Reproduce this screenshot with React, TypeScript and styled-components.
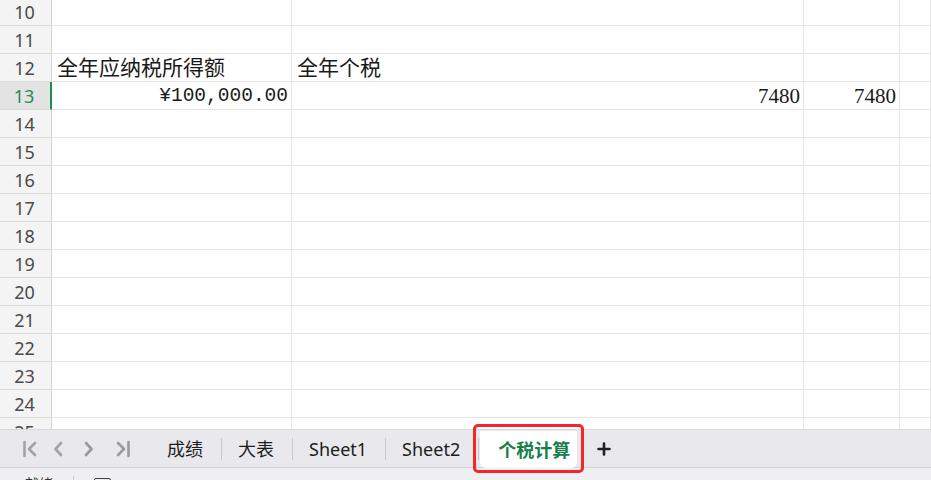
import { createGlobalStyle } from 'styled-components'
import styled from 'styled-components'
import type { FC } from 'react'

const GlobalStyle = createGlobalStyle`
  html, body {
    margin: 0;
    padding: 0;
    width: 931px;
    height: 480px;
    overflow: hidden;
    background: #ffffff;
  }
  * {
    box-sizing: border-box;
  }
`

type CellData = { text: string; kind?: 'text' | 'number' | 'money' }

type RowData = {
  num: number
  cells: CellData[]
}

const empty = (): CellData[] => [{ text: '' }, { text: '' }, { text: '' }, { text: '' }]

const rows: RowData[] = [
  { num: 10, cells: empty() },
  { num: 11, cells: empty() },
  { num: 12, cells: [{ text: '全年应纳税所得额' }, { text: '全年个税' }, { text: '' }, { text: '' }] },
  {
    num: 13,
    cells: [
      { text: '¥100,000.00', kind: 'money' },
      { text: '7480', kind: 'number' },
      { text: '7480', kind: 'number' },
      { text: '' }
    ]
  },
  ...Array.from({ length: 12 }, (_, i) => ({ num: 14 + i, cells: empty() }))
]

const tabs = ['成绩', '大表', 'Sheet1', 'Sheet2']

const App: FC = () => {
  return (
    <>
      <GlobalStyle />
      <Window>
        <GridArea>
          <GridInner>
            {rows.map((row) => (
              <Row key={row.num}>
                <RowHeader $active={row.num === 13}>{row.num}</RowHeader>
                {row.cells.map((cell, i) => (
                  <Cell key={i} $kind={cell.kind ?? 'text'}>
                    {cell.text}
                  </Cell>
                ))}
              </Row>
            ))}
          </GridInner>
        </GridArea>
        <TabBar>
          <NavGroup>
            <NavButton>
              <svg width="16" height="18" viewBox="0 0 16 18" fill="none" stroke="#a3a3a7" strokeWidth="2.6" strokeLinecap="round" strokeLinejoin="round">
                <line x1="2.5" y1="2" x2="2.5" y2="16" />
                <polyline points="13,3 7,9 13,15" />
              </svg>
            </NavButton>
            <NavButton>
              <svg width="10" height="18" viewBox="0 0 10 18" fill="none" stroke="#a3a3a7" strokeWidth="2.6" strokeLinecap="round" strokeLinejoin="round">
                <polyline points="8,3 2.5,9 8,15" />
              </svg>
            </NavButton>
            <NavButton>
              <svg width="10" height="18" viewBox="0 0 10 18" fill="none" stroke="#9a9a9e" strokeWidth="2.6" strokeLinecap="round" strokeLinejoin="round">
                <polyline points="2,3 7.5,9 2,15" />
              </svg>
            </NavButton>
            <NavButton>
              <svg width="16" height="18" viewBox="0 0 16 18" fill="none" stroke="#9a9a9e" strokeWidth="2.6" strokeLinecap="round" strokeLinejoin="round">
                <polyline points="3,3 9,9 3,15" />
                <line x1="13.5" y1="2" x2="13.5" y2="16" />
              </svg>
            </NavButton>
          </NavGroup>
          <Tabs>
            {tabs.map((name) => (
              <Tab key={name}>{name}</Tab>
            ))}
            <ActiveTab>
              个税计算
              <Highlight />
            </ActiveTab>
            <AddButton>
              <svg width="14" height="14" viewBox="0 0 14 14" stroke="#222" strokeWidth="2.6" strokeLinecap="round">
                <line x1="7" y1="1.5" x2="7" y2="12.5" />
                <line x1="1.5" y1="7" x2="12.5" y2="7" />
              </svg>
            </AddButton>
          </Tabs>
        </TabBar>
        <StatusBar>
          <StatusText>就绪</StatusText>
          <StatusDivider />
          <StatusIcon />
        </StatusBar>
      </Window>
    </>
  )
}

const Window = styled.div`
  display: flex;
  flex-direction: column;
  width: 931px;
  height: 480px;
  overflow: hidden;
`

const GridArea = styled.div`
  height: 429px;
  overflow: hidden;
  flex-shrink: 0;
`

const GridInner = styled.div`
  margin-top: -2px;
`

const Row = styled.div`
  display: grid;
  grid-template-columns: 52px 240px 512px 96px 1fr;
  height: 28px;
`

const RowHeader = styled.div<{ $active: boolean }>`
  display: flex;
  align-items: center;
  justify-content: center;
  padding-right: 2px;
  background: ${({ $active }) => ($active ? '#e3e3e3' : '#f4f4f4')};
  border-bottom: 1px solid #dcdcdc;
  border-right: ${({ $active }) => ($active ? '2px solid #1f8c52' : '1px solid #d6d6d6')};
  color: ${({ $active }) => ($active ? '#1f8c52' : '#4a4a4a')};
  font-family: 'Noto Sans', 'Noto Sans CJK SC', sans-serif;
  font-size: 18px;
  line-height: 1;
`

const Cell = styled.div<{ $kind: 'text' | 'number' | 'money' }>`
  display: flex;
  align-items: flex-end;
  justify-content: ${({ $kind }) => ($kind === 'text' ? 'flex-start' : 'flex-end')};
  padding: ${({ $kind }) => ($kind === 'text' ? '0 0 0 5px' : '0 3px 0 0')};
  border-bottom: 1px solid #e4e4e4;
  border-right: 1px solid #e4e4e4;
  font-family: ${({ $kind }) =>
    $kind === 'money' ? "'Liberation Mono', monospace" : "'Liberation Serif', 'Noto Sans CJK SC', serif"};
  font-size: ${({ $kind }) => ($kind === 'money' ? '19.5px' : '21px')};
  line-height: 25px;
  color: #1a1a1a;
  white-space: nowrap;
  overflow: hidden;
`

const TabBar = styled.div`
  height: 39px;
  flex-shrink: 0;
  display: flex;
  align-items: center;
  background: #e9e9ed;
  border-top: 1px solid #d9d9dc;
  border-bottom: 1px solid #d4d4d8;
`

const NavGroup = styled.div`
  display: flex;
  align-items: center;
  width: 151px;
  padding-left: 22px;
`

const NavButton = styled.div`
  width: 31px;
  height: 30px;
  display: flex;
  align-items: center;
  justify-content: flex-start;
`

const Tabs = styled.div`
  display: flex;
  align-items: center;
  height: 100%;
`

const Tab = styled.div`
  height: 22px;
  display: flex;
  align-items: center;
  padding: 0 18px 0 16px;
  border-right: 1px solid #c9c9cd;
  font-family: 'Noto Sans', 'Noto Sans CJK SC', sans-serif;
  font-size: 18px;
  color: #1c1c1c;
  line-height: 1;
`

const ActiveTab = styled.div`
  position: relative;
  height: 37px;
  width: 97px;
  margin-left: 1px;
  margin-top: 1px;
  display: flex;
  align-items: center;
  padding: 0 0 0 18px;
  background: #ffffff;
  border-radius: 0 0 6px 6px;
  font-family: 'Noto Sans CJK SC', sans-serif;
  font-weight: 700;
  font-size: 18px;
  color: #17804a;
  line-height: 1;
`

const Highlight = styled.div`
  position: absolute;
  top: -7px;
  left: -7px;
  right: -7px;
  bottom: -5px;
  border: 3px solid #f5262a;
  border-radius: 5px;
  pointer-events: none;
`

const AddButton = styled.div`
  width: 40px;
  height: 30px;
  display: flex;
  align-items: center;
  justify-content: center;
  margin-left: 7px;
`

const StatusBar = styled.div`
  flex: 1;
  display: flex;
  align-items: flex-start;
  padding: 8px 0 0 25px;
  background: #efeff2;
  overflow: hidden;
`

const StatusText = styled.div`
  font-family: 'Noto Sans CJK SC', sans-serif;
  font-size: 14px;
  line-height: 1;
  color: #333;
`

const StatusDivider = styled.div`
  width: 1px;
  height: 14px;
  margin: 0 20px;
  background: #c8c8cc;
`

const StatusIcon = styled.div`
  width: 17px;
  height: 14px;
  margin-top: 2px;
  border: 1.5px solid #444;
  border-radius: 2px;
`

export default App
